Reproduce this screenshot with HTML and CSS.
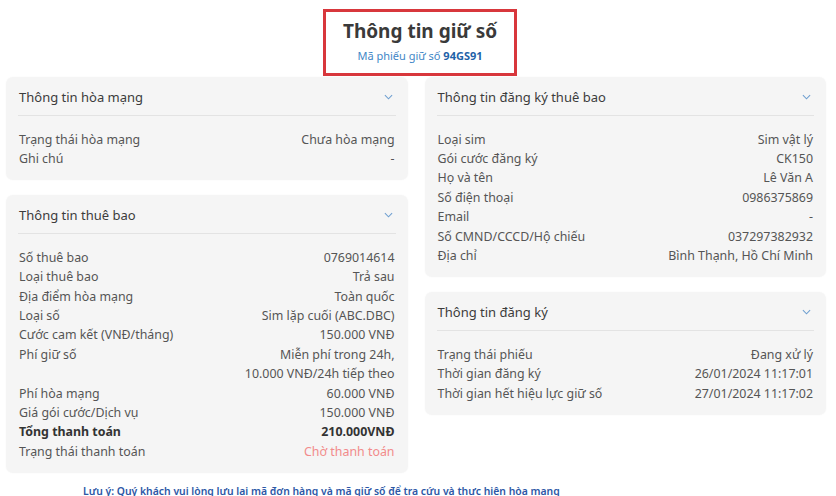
FILE: index.html
```html
<!DOCTYPE html>
<html lang="vi">
<head>
<meta charset="utf-8">
<link rel="stylesheet" href="styles.css">
</head>
<body>
<div class="page">
  <header class="head">
    <div class="head-box">
      <h1 class="title">Thông tin giữ số</h1>
      <p class="code">Mã phiếu giữ số <b>94GS91</b></p>
    </div>
  </header>

  <div class="cols">
    <div class="col">
      <section class="card">
        <div class="card-head"><span>Thông tin hòa mạng</span><svg class="chev" viewBox="0 0 10 6" width="9" height="6"><path d="M1 1l4 4 4-4" fill="none" stroke="#6f9fd0" stroke-width="1.2"/></svg></div>
        <div class="card-body">
          <div class="row"><span>Trạng thái hòa mạng</span><span>Chưa hòa mạng</span></div>
          <div class="row"><span>Ghi chú</span><span>-</span></div>
        </div>
      </section>

      <section class="card">
        <div class="card-head"><span>Thông tin thuê bao</span><svg class="chev" viewBox="0 0 10 6" width="9" height="6"><path d="M1 1l4 4 4-4" fill="none" stroke="#6f9fd0" stroke-width="1.2"/></svg></div>
        <div class="card-body">
          <div class="row"><span>Số thuê bao</span><span>0769014614</span></div>
          <div class="row"><span>Loại thuê bao</span><span>Trả sau</span></div>
          <div class="row"><span>Địa điểm hòa mạng</span><span>Toàn quốc</span></div>
          <div class="row"><span>Loại số</span><span>Sim lặp cuối (ABC.DBC)</span></div>
          <div class="row"><span>Cước cam kết (VNĐ/tháng)</span><span>150.000 VNĐ</span></div>
          <div class="row"><span>Phí giữ số</span><span>Miễn phí trong 24h,<br>10.000 VNĐ/24h tiếp theo</span></div>
          <div class="row"><span>Phí hòa mạng</span><span>60.000 VNĐ</span></div>
          <div class="row"><span>Giá gói cước/Dịch vụ</span><span>150.000 VNĐ</span></div>
          <div class="row total"><span>Tổng thanh toán</span><span>210.000VNĐ</span></div>
          <div class="row"><span>Trạng thái thanh toán</span><span class="pending">Chờ thanh toán</span></div>
        </div>
      </section>
    </div>

    <div class="col">
      <section class="card">
        <div class="card-head"><span>Thông tin đăng ký thuê bao</span><svg class="chev" viewBox="0 0 10 6" width="9" height="6"><path d="M1 1l4 4 4-4" fill="none" stroke="#6f9fd0" stroke-width="1.2"/></svg></div>
        <div class="card-body">
          <div class="row"><span>Loại sim</span><span>Sim vật lý</span></div>
          <div class="row"><span>Gói cước đăng ký</span><span>CK150</span></div>
          <div class="row"><span>Họ và tên</span><span>Lê Văn A</span></div>
          <div class="row"><span>Số điện thoại</span><span>0986375869</span></div>
          <div class="row"><span>Email</span><span>-</span></div>
          <div class="row"><span>Số CMND/CCCD/Hộ chiếu</span><span>037297382932</span></div>
          <div class="row"><span>Địa chỉ</span><span>Bình Thạnh, Hồ Chí Minh</span></div>
        </div>
      </section>

      <section class="card">
        <div class="card-head"><span>Thông tin đăng ký</span><svg class="chev" viewBox="0 0 10 6" width="9" height="6"><path d="M1 1l4 4 4-4" fill="none" stroke="#6f9fd0" stroke-width="1.2"/></svg></div>
        <div class="card-body">
          <div class="row"><span>Trạng thái phiếu</span><span>Đang xử lý</span></div>
          <div class="row"><span>Thời gian đăng ký</span><span>26/01/2024 11:17:01</span></div>
          <div class="row"><span>Thời gian hết hiệu lực giữ số</span><span>27/01/2024 11:17:02</span></div>
        </div>
      </section>
    </div>
  </div>

  <p class="note">Lưu ý: Quý khách vui lòng lưu lại mã đơn hàng và mã giữ số để tra cứu và thực hiện hòa mạng</p>
</div>
</body>
</html>
```

FILE: styles.css
```css
* { box-sizing: border-box; }
html, body { margin: 0; padding: 0; background: #fff; }
body {
  font-family: "Noto Sans", "Open Sans", sans-serif;
  color: #555;
  overflow: hidden;
  height: 496px;
}
.page { padding: 9px 10px 0 6px; }
.head { display: flex; justify-content: center; padding-left: 8px; }
.head-box {
  width: 194px;
  height: 67px;
  border: 3px solid #d8373c;
  text-align: center;
  padding-top: 4px;
}
.title {
  margin: 0;
  font-size: 19px;
  line-height: 30px;
  font-weight: 700;
  color: #3a3a3a;
}
.code {
  margin: 2px 0 0;
  font-size: 11px;
  line-height: 16px;
  color: #3f86c6;
}
.code b { color: #1e62a8; font-weight: 700; }

.cols {
  display: grid;
  grid-template-columns: 1fr 1fr;
  gap: 17px;
  margin-top: 1px;
}
.col { display: flex; flex-direction: column; gap: 15px; }
.card {
  background: #f5f5f5;
  border-radius: 7px;
  padding: 0 12px 12px;
  box-shadow: 0 0 2px rgba(0,0,0,0.04);
}
.card-head {
  display: flex;
  justify-content: space-between;
  align-items: center;
  height: 39px;
  border-bottom: 1px solid #e3e3e3;
  font-size: 13px;
  color: #3c3c3c;
  padding: 1px 1px 0 1px;
}
.chev { margin-right: 2px; }
.card-body { padding-top: 13.5px; }
.row {
  display: flex;
  justify-content: space-between;
  font-size: 12.4px;
  line-height: 19.4px;
  color: #555;
  padding: 0 1px;
}
.row span:last-child { text-align: right; }
.row.total { font-weight: 700; color: #333; }
.pending { color: #f28b8b; }
.note {
  margin: 11px 0 0 77px;
  font-size: 10.4px;
  font-weight: 600;
  color: #2c57a6;
}
```
